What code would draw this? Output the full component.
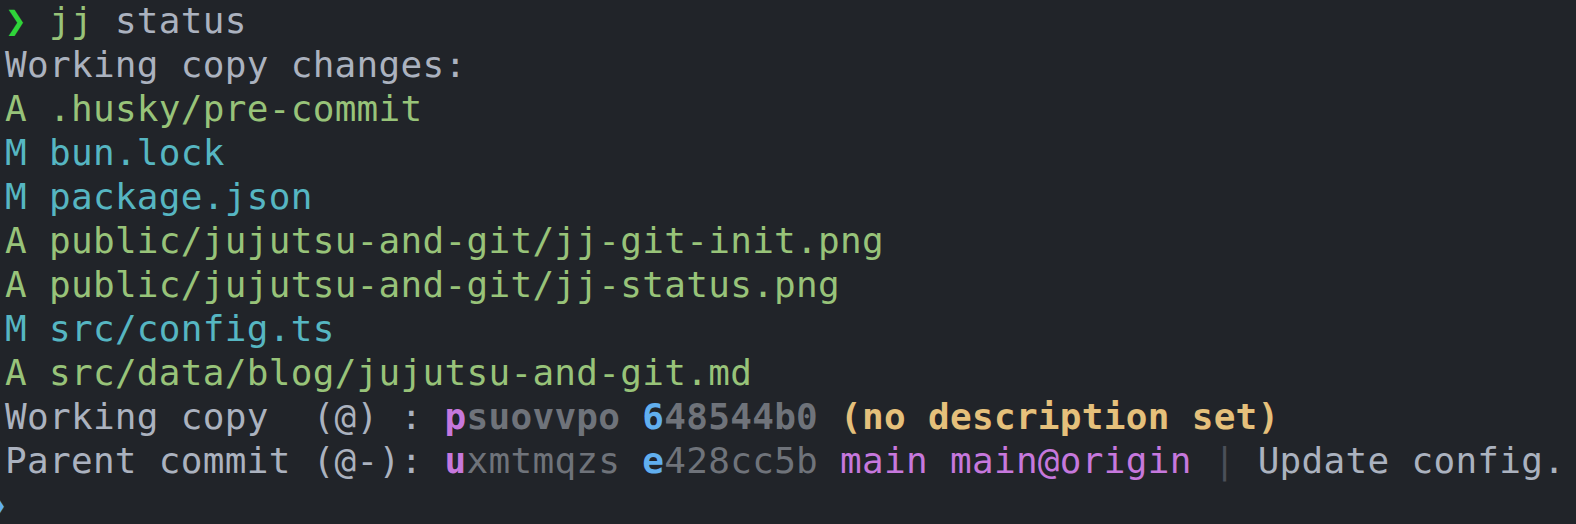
const files = [
  { code: "A", path: ".husky/pre-commit" },
  { code: "M", path: "bun.lock" },
  { code: "M", path: "package.json" },
  { code: "A", path: "public/jujutsu-and-git/jj-git-init.png" },
  { code: "A", path: "public/jujutsu-and-git/jj-status.png" },
  { code: "M", path: "src/config.ts" },
  { code: "A", path: "src/data/blog/jujutsu-and-git.md" },
];

function FileLine({ code, path }: { code: string; path: string }) {
  const color = code === "M" ? "text-[#56b6c2]" : "text-[#98c379]";
  return (
    <div className={color}>
      {code} {path}
    </div>
  );
}

export default function App() {
  return (
    <div className="w-[1576px] h-[524px] overflow-hidden bg-[#212429]">
      <div
        className="mt-[-1px] pl-[5px] text-[36px] leading-[44px] tracking-[0.3px] whitespace-pre text-[#abb2bf]"
        style={{ fontFamily: '"DejaVu Sans Mono", "Liberation Mono", monospace' }}
      >
        <div>
          <span className="text-[#2fd43a] font-bold">❯</span>{" "}
          <span className="text-[#98c379]">jj</span> status
        </div>
        <div>Working copy changes:</div>
        {files.map((f) => (
          <FileLine key={f.path} code={f.code} path={f.path} />
        ))}
        <div>
          Working copy  (@) :{" "}
          <span className="font-bold text-[#c678dd]">p</span>
          <span className="font-bold text-[#6f737a]">suovvpo</span>{" "}
          <span className="font-bold text-[#61afef]">6</span>
          <span className="font-bold text-[#6f737a]">48544b0</span>{" "}
          <span className="font-bold text-[#e5c07b]">(no description set)</span>
        </div>
        <div>
          Parent commit (@-):{" "}
          <span className="font-bold text-[#c678dd]">u</span>
          <span className="text-[#6f737a]">xmtmqzs</span>{" "}
          <span className="font-bold text-[#61afef]">e</span>
          <span className="text-[#6f737a]">428cc5b</span>{" "}
          <span className="text-[#c678dd]">main main@origin</span>{" "}
          <span className="text-[#4b5059]">|</span> Update config.
        </div>
        <div className="ml-[-19px]">
          <span className="text-[#61afef] font-bold">❯</span>
        </div>
      </div>
    </div>
  );
}
